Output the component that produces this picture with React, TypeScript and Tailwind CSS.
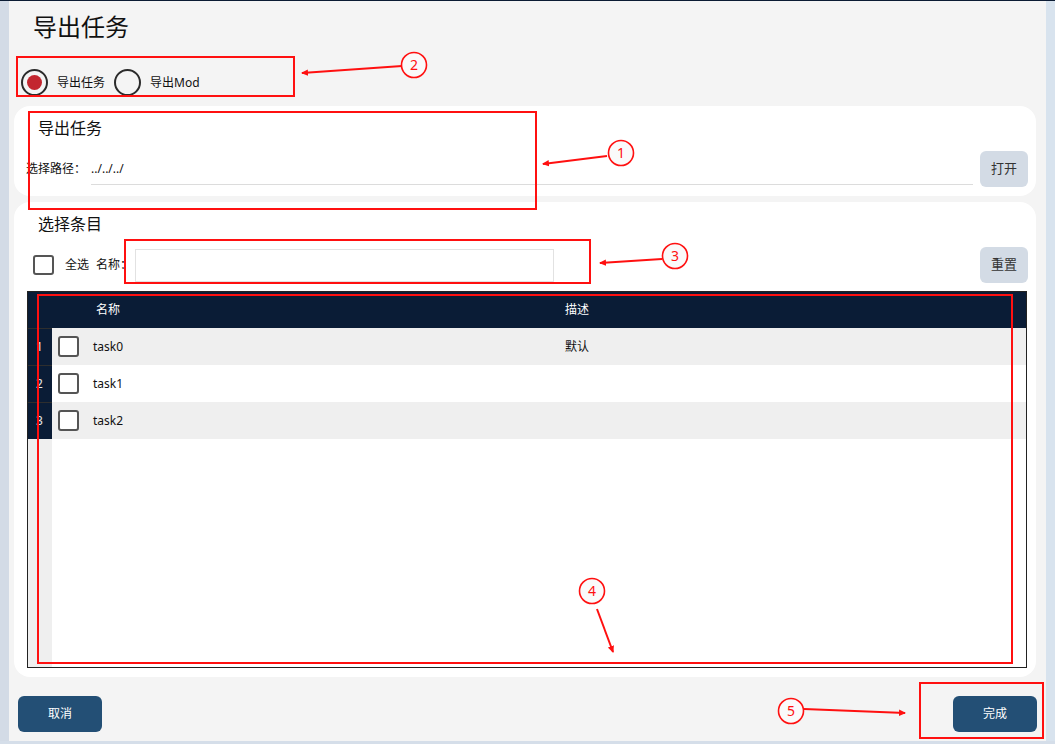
import React from "react";

const FONT = { fontFamily: '"Noto Sans", "Noto Sans CJK SC", sans-serif' };

type Task = { name: string; desc: string };

const tasks: Task[] = [
  { name: "task0", desc: "默认" },
  { name: "task1", desc: "" },
  { name: "task2", desc: "" },
];

function Box({ className = "" }: { className?: string }) {
  return (
    <div
      className={
        "box-border border-2 border-[#555] rounded-[3px] bg-white " + className
      }
    />
  );
}

function Radio({ checked, label }: { checked: boolean; label: string }) {
  return (
    <div className="flex items-center">
      <div className="box-border w-[27px] h-[27px] rounded-full border-2 border-[#2b2b2b] flex items-center justify-center">
        {checked && <div className="w-[15px] h-[15px] rounded-full bg-[#c3262f]" />}
      </div>
      <span className="ml-[9px] text-[12px] text-[#111] leading-none">{label}</span>
    </div>
  );
}

function Annotations() {
  const red = "#ff1010";
  const circles: [number, number, string][] = [
    [621, 153, "1"],
    [414, 65, "2"],
    [675, 256, "3"],
    [592, 591, "4"],
    [791, 711, "5"],
  ];
  const arrows: [number, number, number, number][] = [
    [607, 156, 543, 164],
    [402, 66, 302, 73],
    [662, 259, 600, 263],
    [597, 609, 613, 652],
    [804, 709, 905, 713],
  ];
  return (
    <svg
      className="absolute inset-0 pointer-events-none"
      width={1055}
      height={744}
      viewBox="0 0 1055 744"
    >
      <defs>
        <marker
          id="head"
          markerWidth="8"
          markerHeight="8"
          refX="6"
          refY="4"
          orient="auto"
          markerUnits="userSpaceOnUse"
        >
          <path d="M0,0.8 L7,4 L0,7.2 Z" fill={red} />
        </marker>
      </defs>
      <g fill="none" stroke={red} strokeWidth={2}>
        <rect x={17} y={57} width={277} height={39} />
        <rect x={29} y={112} width={507} height={97} />
        <rect x={125} y={240} width={465} height={43} />
        <rect x={38} y={295} width={974} height={368} />
        <rect x={920} y={683} width={123} height={55} />
      </g>
      {arrows.map(([x1, y1, x2, y2], i) => (
        <line
          key={i}
          x1={x1}
          y1={y1}
          x2={x2}
          y2={y2}
          stroke={red}
          strokeWidth={2}
          markerEnd="url(#head)"
        />
      ))}
      {circles.map(([cx, cy, t]) => (
        <g key={t}>
          <circle cx={cx} cy={cy} r={12.5} fill="#fafafa" stroke={red} strokeWidth={1.6} />
          <text
            x={cx}
            y={cy + 5}
            textAnchor="middle"
            fontSize={14}
            fill={red}
            style={FONT}
          >
            {t}
          </text>
        </g>
      ))}
    </svg>
  );
}

export default function App() {
  return (
    <div
      className="relative w-[1055px] h-[744px] overflow-hidden flex flex-col bg-[#d5dee9] text-[#111]"
      style={FONT}
    >
      <div className="h-[1px] bg-[#0b1b33]" />
      <div className="flex h-[740px]">
        <div className="w-[9px] bg-[#d3dbe6]" />
        <div className="w-[1037px] bg-[#f4f4f4] flex flex-col">
          {/* page title */}
          <div className="h-[54px] pl-[24px] pb-[2px] flex items-center text-[24px] leading-none text-[#111]">
            导出任务
          </div>

          {/* export type */}
          <div className="h-[51px] pt-[4px] pl-[12px] flex items-center gap-[9px]">
            <Radio checked label="导出任务" />
            <Radio checked={false} label="导出Mod" />
          </div>

          {/* path card */}
          <div className="ml-[5px] mr-[10px] h-[90px] rounded-[16px] bg-white pt-[10px] flex flex-col">
            <div className="pl-[24px] h-[24px] leading-[24px] text-[16px]">导出任务</div>
            <div className="mt-[11px] h-[36px] pl-[12px] pr-[8px] flex items-center">
              <span className="text-[12px] leading-none">选择路径：</span>
              <div className="ml-[5px] flex-1 h-[32px] border-b border-[#dcdcdc] flex items-center text-[12px]">
                ../../../
              </div>
              <button className="ml-[7px] w-[48px] h-[36px] rounded-[6px] bg-[#d3dbe5] text-[13px] text-[#333]">
                打开
              </button>
            </div>
          </div>

          {/* item list card */}
          <div className="mt-[6px] ml-[5px] mr-[10px] h-[475px] rounded-[16px] bg-white pt-[10px] pb-[9px] flex flex-col">
            <div className="pl-[24px] h-[24px] leading-[24px] text-[16px]">选择条目</div>
            <div className="mt-[11px] h-[36px] pl-[19px] pr-[8px] flex items-center">
              <Box className="w-[21px] h-[20px]" />
              <span className="ml-[11px] text-[12px] leading-none">全选</span>
              <span className="ml-[7px] text-[12px] leading-none">名称：</span>
              <div className="ml-[3px] w-[419px] h-[33px] box-border border border-[#e2e2e2] bg-white" />
              <div className="flex-1" />
              <button className="w-[48px] h-[36px] rounded-[6px] bg-[#d3dbe5] text-[13px] text-[#333]">
                重置
              </button>
            </div>

            {/* table */}
            <div className="mt-[8px] ml-[13px] mr-[9px] flex-1 box-border border border-[#222] flex flex-col overflow-hidden">
              <div className="h-[36px] bg-[#0a1c36] flex items-center text-white text-[12px]">
                <div className="w-[60px]" />
                <div className="w-[472px] pl-[8px]">名称</div>
                <div className="pl-[5px]">描述</div>
              </div>
              {tasks.map((t, i) => (
                <div
                  key={t.name}
                  className={
                    "h-[37px] flex items-center text-[12px] " +
                    (i % 2 === 0 ? "bg-[#efefef]" : "bg-white")
                  }
                >
                  <div className="w-[24px] h-full box-border border-t border-[#2e2e2e] bg-[#0a1c36] flex items-center">
                    <span className="ml-[8px] text-[12px] text-[#e8e8e8] leading-none">
                      {i + 1}
                    </span>
                  </div>
                  <div className="w-[36px] pl-[6px] flex items-center">
                    <Box className="w-[21px] h-[21px]" />
                  </div>
                  <div className="w-[472px] pl-[5px]">{t.name}</div>
                  <div className="pl-[5px]">{t.desc}</div>
                </div>
              ))}
              <div className="flex-1 flex">
                <div className="w-[24px] bg-[#efefef]" />
                <div className="flex-1 bg-white" />
              </div>
            </div>
          </div>

          {/* footer actions */}
          <div className="mt-[19px] h-[36px] pl-[9px] pr-[9px] flex items-center justify-between">
            <button className="w-[84px] h-[36px] rounded-[6px] bg-[#234f75] text-white text-[12px]">
              取消
            </button>
            <button className="w-[84px] h-[36px] rounded-[6px] bg-[#234f75] text-white text-[12px]">
              完成
            </button>
          </div>
        </div>
        <div className="w-[9px] bg-[#d8e3ee]" />
      </div>
      <div className="h-[3px] bg-[#d5dee9]" />
      <Annotations />
    </div>
  );
}
